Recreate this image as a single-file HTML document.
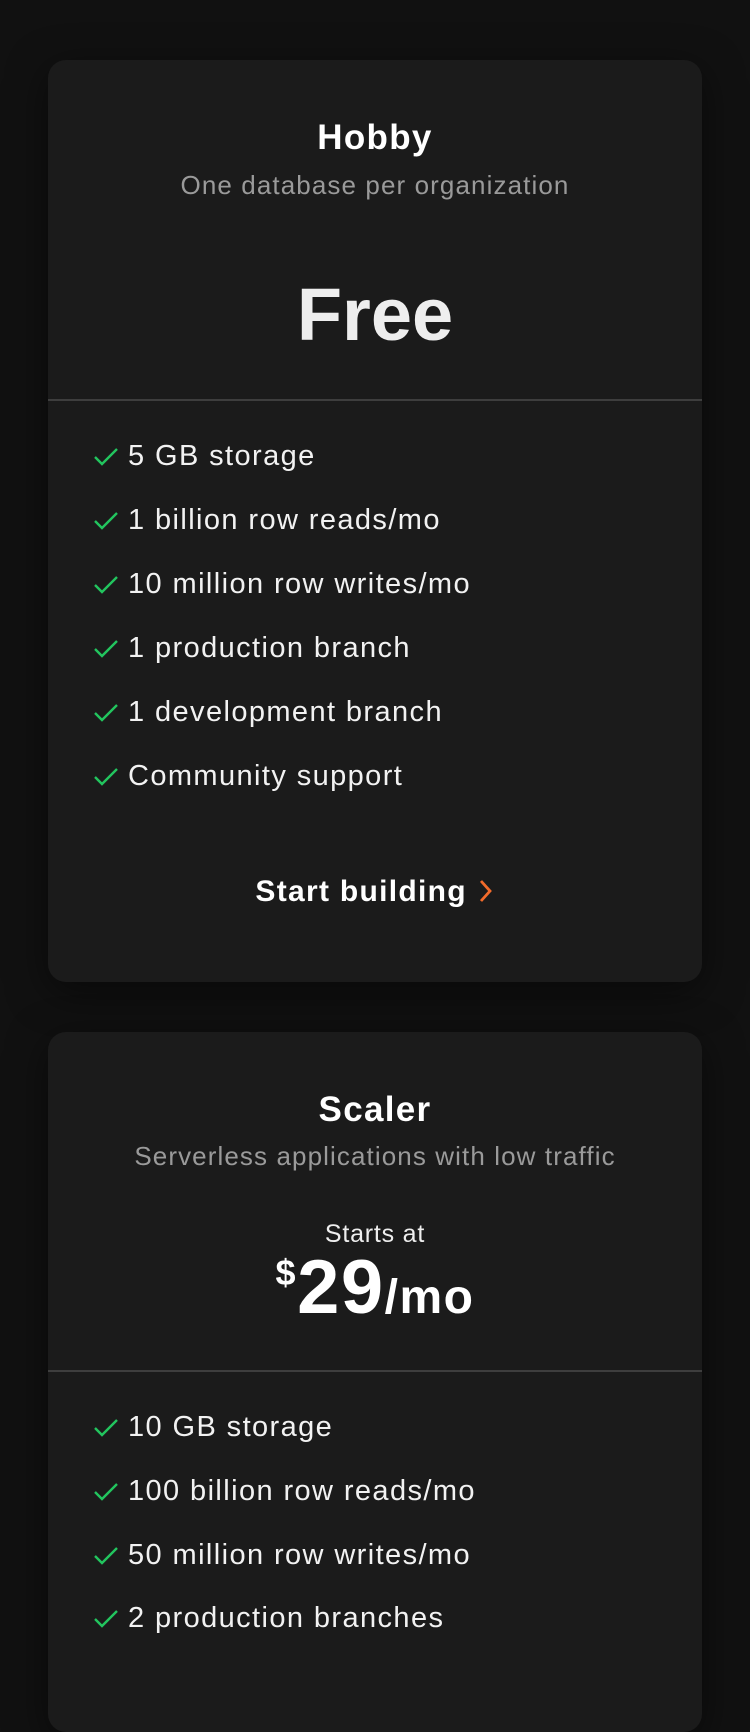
<!DOCTYPE html>
<html><head><meta charset="utf-8"><style>
*{margin:0;padding:0;box-sizing:border-box}
body{width:750px;height:1624px;background:#111;font-family:"Liberation Sans",sans-serif;overflow:hidden;position:relative;color:#fff}
.card{position:absolute;left:48px;width:654px;background:#1b1b1b;border-radius:18px;box-shadow:0 10px 40px rgba(0,0,0,.5)}
.c{position:absolute;left:0;width:100%;text-align:center;white-space:nowrap}
.t{font-size:35px;font-weight:bold;line-height:1;letter-spacing:1.3px}
.s{font-size:26px;color:#9a9a9a;line-height:1;letter-spacing:1.1px}
.hr{position:absolute;left:0;width:100%;height:2px;background:#3e3e3e}
.f{position:absolute;left:80px;font-size:29px;line-height:1;color:#f2f2f2;white-space:nowrap;letter-spacing:1.4px}
.f svg{position:absolute;left:-36px;top:3px}
</style></head><body>
<div class="card" style="top:60px;height:922px">
  <div class="c t" style="top:60px">Hobby</div>
  <div class="c s" style="top:112px">One database per organization</div>
  <div class="c" style="top:218px;font-size:74px;font-weight:bold;color:#eee;line-height:1">Free</div>
  <div class="hr" style="top:339px"></div>
  <div class="f" style="top:382px"><svg width="28" height="24" viewBox="0 0 28 24"><path d="M3 12l7 7L25 4" fill="none" stroke="#22c55e" stroke-width="2.4"/></svg>5 GB storage</div>
  <div class="f" style="top:446px"><svg width="28" height="24" viewBox="0 0 28 24"><path d="M3 12l7 7L25 4" fill="none" stroke="#22c55e" stroke-width="2.4"/></svg>1 billion row reads/mo</div>
  <div class="f" style="top:510px"><svg width="28" height="24" viewBox="0 0 28 24"><path d="M3 12l7 7L25 4" fill="none" stroke="#22c55e" stroke-width="2.4"/></svg>10 million row writes/mo</div>
  <div class="f" style="top:574px"><svg width="28" height="24" viewBox="0 0 28 24"><path d="M3 12l7 7L25 4" fill="none" stroke="#22c55e" stroke-width="2.4"/></svg>1 production branch</div>
  <div class="f" style="top:638px"><svg width="28" height="24" viewBox="0 0 28 24"><path d="M3 12l7 7L25 4" fill="none" stroke="#22c55e" stroke-width="2.4"/></svg>1 development branch</div>
  <div class="f" style="top:702px"><svg width="28" height="24" viewBox="0 0 28 24"><path d="M3 12l7 7L25 4" fill="none" stroke="#22c55e" stroke-width="2.4"/></svg>Community support</div>
  <div class="c" style="top:817px;font-size:30px;font-weight:bold;line-height:1;letter-spacing:1.3px">Start building <svg width="18" height="26" viewBox="0 0 18 26" style="vertical-align:-3px"><path d="M4 3l9 10-9 10" fill="none" stroke="#f36b2b" stroke-width="2.8"/></svg></div>
</div>
<div class="card" style="top:1032px;height:700px">
  <div class="c t" style="top:60px">Scaler</div>
  <div class="c s" style="top:111px">Serverless applications with low traffic</div>
  <div class="c" style="top:190px;font-size:25px;line-height:1;color:#eee;letter-spacing:0.8px">Starts at</div>
  <div class="c" style="top:218px;line-height:1;font-weight:bold;letter-spacing:1.5px"><span style="font-size:36px;vertical-align:28px">$</span><span style="font-size:76px">29</span><span style="font-size:48px">/mo</span></div>
  <div class="hr" style="top:338px"></div>
  <div class="f" style="top:381px"><svg width="28" height="24" viewBox="0 0 28 24"><path d="M3 12l7 7L25 4" fill="none" stroke="#22c55e" stroke-width="2.4"/></svg>10 GB storage</div>
  <div class="f" style="top:445px"><svg width="28" height="24" viewBox="0 0 28 24"><path d="M3 12l7 7L25 4" fill="none" stroke="#22c55e" stroke-width="2.4"/></svg>100 billion row reads/mo</div>
  <div class="f" style="top:509px"><svg width="28" height="24" viewBox="0 0 28 24"><path d="M3 12l7 7L25 4" fill="none" stroke="#22c55e" stroke-width="2.4"/></svg>50 million row writes/mo</div>
  <div class="f" style="top:572px"><svg width="28" height="24" viewBox="0 0 28 24"><path d="M3 12l7 7L25 4" fill="none" stroke="#22c55e" stroke-width="2.4"/></svg>2 production branches</div>
</div>
</body></html>
